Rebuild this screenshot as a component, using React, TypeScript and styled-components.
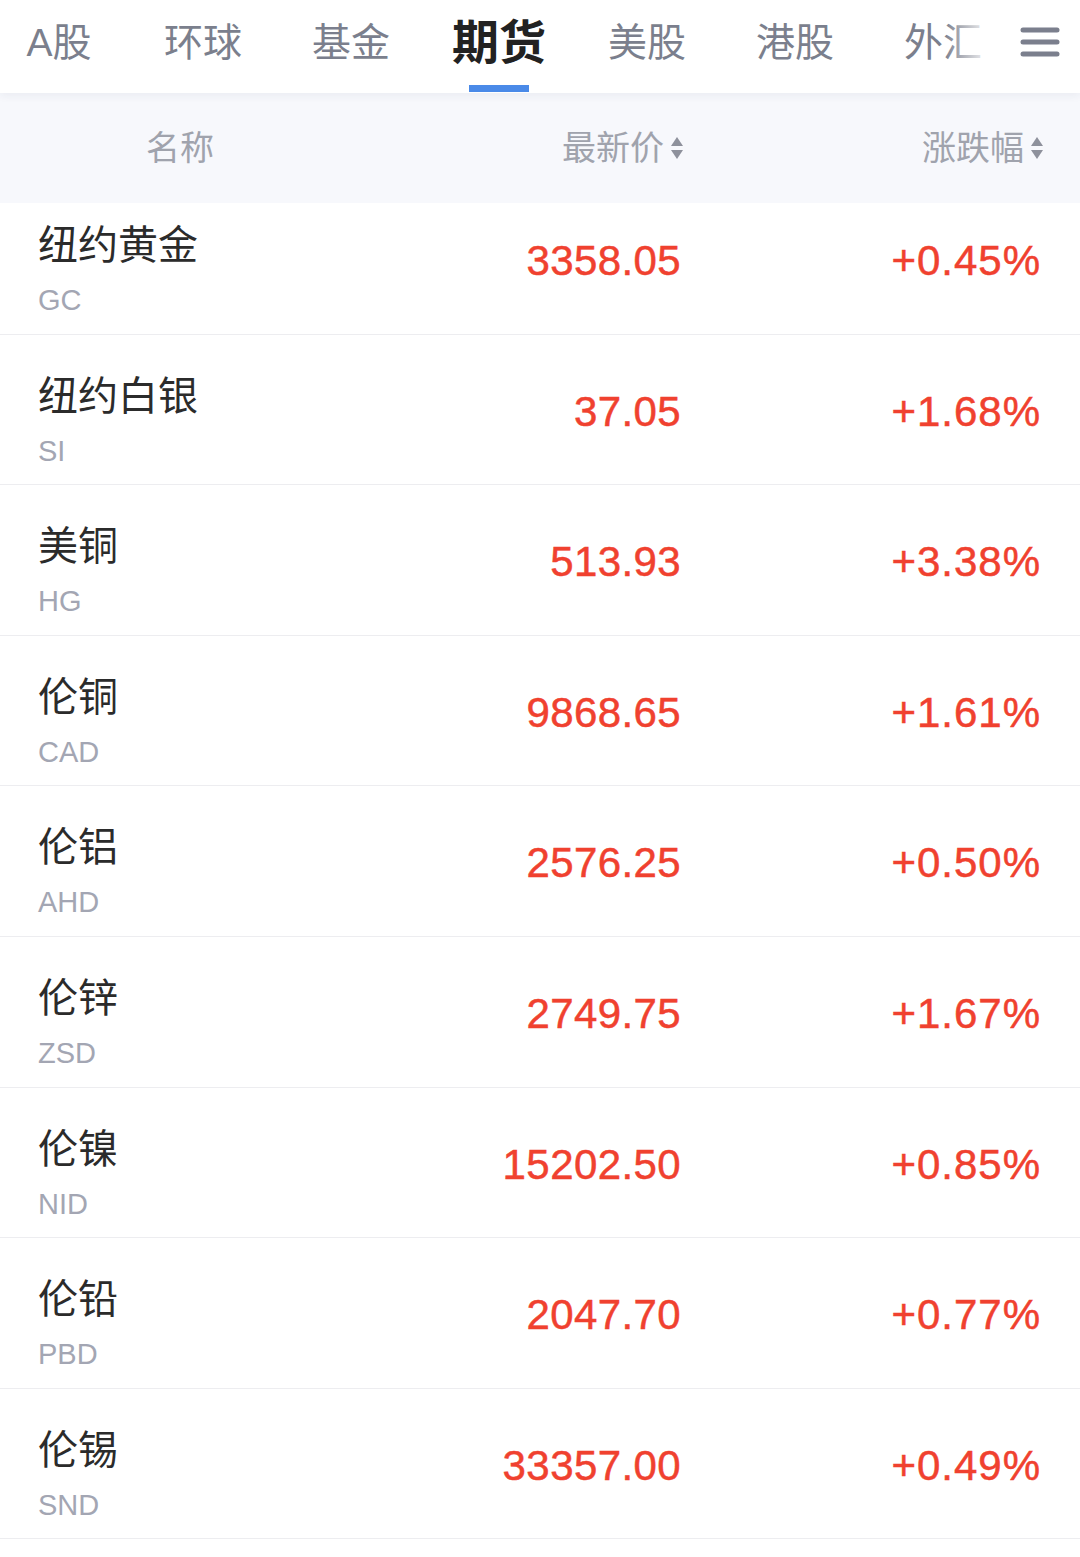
import React from 'react';
import styled, {createGlobalStyle} from 'styled-components';

const GlobalStyle = createGlobalStyle`
  html, body {
    margin: 0;
    padding: 0;
    background: #ffffff;
  }
  body {
    font-family: "Liberation Sans", "Noto Sans CJK SC", sans-serif;
  }
`;

const Page = styled.div`
  width: 1080px;
  min-height: 1557px;
  background: #ffffff;
  overflow: hidden;
`;

const TabBar = styled.div`
  position: relative;
  z-index: 1;
  display: flex;
  height: 93px;
  background: #ffffff;
  box-shadow: 0 3px 8px rgba(40, 50, 80, 0.06);
`;

const TabStrip = styled.div`
  position: relative;
  flex: 1;
  display: flex;
  overflow: hidden;

  &::after {
    content: '';
    position: absolute;
    top: 0;
    right: 0;
    width: 56px;
    height: 100%;
    background: linear-gradient(to right, rgba(255, 255, 255, 0), #ffffff 85%);
  }
`;

const Tab = styled.div<{$active?: boolean}>`
  position: relative;
  flex: 0 0 148px;
  height: 93px;
  line-height: 86px;
  text-align: center;
  font-size: ${p => (p.$active ? '47px' : '39px')};
  font-weight: ${p => (p.$active ? 700 : 400)};
  color: ${p => (p.$active ? '#222222' : '#7b7f8d')};

  /* the strip is scrolled a little to the left */
  &:first-child {
    flex-basis: 140px;
    margin-left: -11px;
  }

  &::after {
    content: '';
    display: ${p => (p.$active ? 'block' : 'none')};
    position: absolute;
    left: 44px;
    bottom: 1px;
    width: 60px;
    height: 7px;
    background: #4a8ae8;
  }
`;

const MenuButton = styled.div`
  flex: 0 0 80px;
  display: flex;
  align-items: flex-start;
  justify-content: center;
  padding-top: 24px;
  box-sizing: border-box;
`;

const HeaderRow = styled.div`
  display: grid;
  grid-template-columns: 1fr 1fr 1fr;
  height: 110px;
  background: #f7f8fc;
  align-items: center;
`;

const HeaderCell = styled.div<{$align: 'center' | 'right'}>`
  display: flex;
  align-items: center;
  justify-content: ${p => (p.$align === 'center' ? 'center' : 'flex-end')};
  padding-right: ${p => (p.$align === 'center' ? '0' : '36px')};
  font-size: 34px;
  line-height: 40px;
  color: #a0a3ad;
  gap: 6px;
`;

const Row = styled.div<{$first?: boolean}>`
  display: grid;
  grid-template-columns: 1fr 1fr 1fr;
  box-sizing: border-box;
  height: ${p => (p.$first ? '131.6px' : '150.6px')};
  border-bottom: 1px solid #ededf0;
`;

const NameCell = styled.div<{$first?: boolean}>`
  display: flex;
  flex-direction: column;
  padding-left: 38px;
  padding-top: ${p => (p.$first ? '15px' : '34px')};
`;

const Name = styled.div`
  font-family: "Noto Sans CJK SC", sans-serif;
  font-size: 40px;
  line-height: 48px;
  color: #2b2b2b;
  white-space: nowrap;
`;

const Code = styled.div`
  margin-top: 17px;
  font-size: 29px;
  line-height: 34px;
  color: #a3a6b3;
`;

const ValueCell = styled.div<{$first?: boolean; $spacing: number}>`
  display: flex;
  justify-content: flex-end;
  align-items: flex-start;
  padding-right: 39px;
  padding-top: ${p => (p.$first ? '32px' : '51px')};
  font-size: 42px;
  line-height: 52px;
  letter-spacing: ${p => p.$spacing}px;
  color: #f0412f;
  -webkit-text-stroke: 0.5px #f0412f;
`;

const SortIcon = () => (
  <svg width="14" height="26" viewBox="0 0 14 26">
    <path d="M7 2 L13 11 L1 11 Z" fill="#8e919c" />
    <path d="M1 15 L13 15 L7 24 Z" fill="#8e919c" />
  </svg>
);

const MenuIcon = () => (
  <svg width="40" height="36" viewBox="0 0 40 36">
    <g stroke="#7b7f8d" strokeWidth="5" strokeLinecap="round">
      <line x1="3" y1="6" x2="37" y2="6" />
      <line x1="3" y1="18" x2="37" y2="18" />
      <line x1="3" y1="30" x2="37" y2="30" />
    </g>
  </svg>
);

const tabs = ['A股', '环球', '基金', '期货', '美股', '港股', '外汇'];

const quotes = [
  {name: '纽约黄金', code: 'GC', price: '3358.05', change: '+0.45%'},
  {name: '纽约白银', code: 'SI', price: '37.05', change: '+1.68%'},
  {name: '美铜', code: 'HG', price: '513.93', change: '+3.38%'},
  {name: '伦铜', code: 'CAD', price: '9868.65', change: '+1.61%'},
  {name: '伦铝', code: 'AHD', price: '2576.25', change: '+0.50%'},
  {name: '伦锌', code: 'ZSD', price: '2749.75', change: '+1.67%'},
  {name: '伦镍', code: 'NID', price: '15202.50', change: '+0.85%'},
  {name: '伦铅', code: 'PBD', price: '2047.70', change: '+0.77%'},
  {name: '伦锡', code: 'SND', price: '33357.00', change: '+0.49%'},
];

const App = () => {
  return (
    <Page>
      <GlobalStyle />
      <TabBar>
        <TabStrip>
          {tabs.map(t => (
            <Tab key={t} $active={t === '期货'}>
              {t}
            </Tab>
          ))}
        </TabStrip>
        <MenuButton>
          <MenuIcon />
        </MenuButton>
      </TabBar>
      <HeaderRow>
        <HeaderCell $align="center">名称</HeaderCell>
        <HeaderCell $align="right">
          最新价
          <SortIcon />
        </HeaderCell>
        <HeaderCell $align="right">
          涨跌幅
          <SortIcon />
        </HeaderCell>
      </HeaderRow>
      {quotes.map((q, i) => (
        <Row key={q.code} $first={i === 0}>
          <NameCell $first={i === 0}>
            <Name>{q.name}</Name>
            <Code>{q.code}</Code>
          </NameCell>
          <ValueCell $first={i === 0} $spacing={0.4}>
            {q.price}
          </ValueCell>
          <ValueCell $first={i === 0} $spacing={1}>
            {q.change}
          </ValueCell>
        </Row>
      ))}
    </Page>
  );
};

export default App;
